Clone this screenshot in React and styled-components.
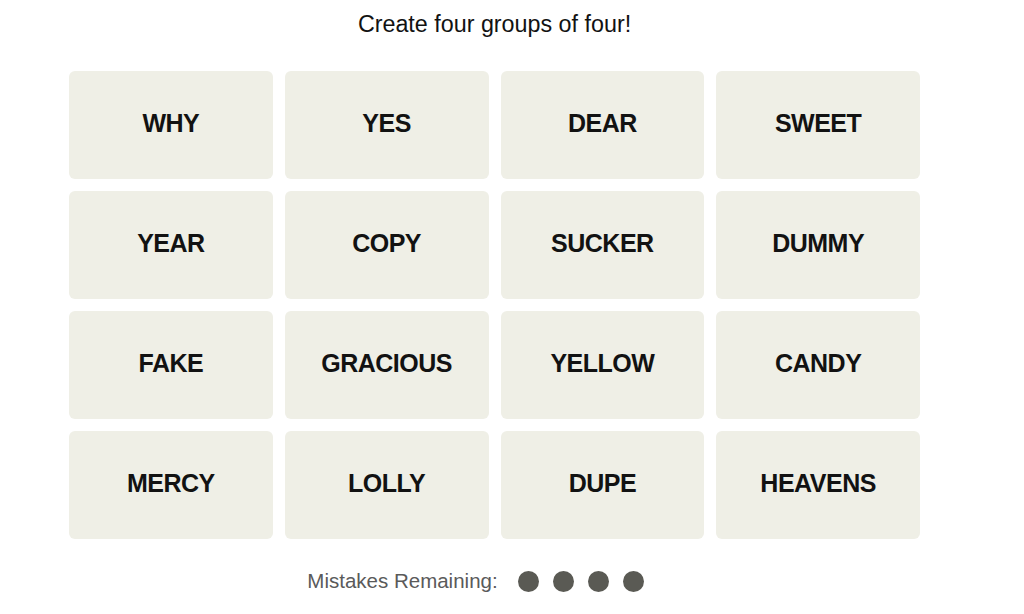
import React from "react";
import styled, { createGlobalStyle } from "styled-components";

const Global = createGlobalStyle`
  html, body { margin: 0; padding: 0; background: #ffffff; }
  body { font-family: "Liberation Sans", Arial, sans-serif; color: #121212; }
`;

const Page = styled.main`
  width: 851px;
  margin-left: 69px;
  padding-top: 9px;
  display: flex;
  flex-direction: column;
`;

const Title = styled.h1`
  margin: 0;
  height: 30px;
  line-height: 30px;
  font-size: 23.3px;
  font-weight: 400;
  text-align: center;
  color: #121212;
`;

const Grid = styled.section`
  margin-top: 32px;
  display: grid;
  grid-template-columns: repeat(4, 1fr);
  grid-auto-rows: 108px;
  gap: 12px;
`;

const Tile = styled.button`
  border: none;
  border-radius: 6px;
  background: #efefe6;
  font-family: "Liberation Sans", Arial, sans-serif;
  font-size: 25px;
  letter-spacing: -0.5px;
  font-weight: 700;
  color: #121212;
  text-transform: uppercase;
  display: flex;
  align-items: center;
  justify-content: center;
  padding: 0 0 4px 0;
  cursor: pointer;
`;

const Footer = styled.div`
  margin-top: 31px;
  height: 22px;
  display: flex;
  align-items: center;
  justify-content: center;
  padding-right: 38px;
  gap: 14px;
`;

const Label = styled.span`
  font-size: 20.5px;
  color: #5a5a5a;
  margin-right: 6px;
`;

const Dot = styled.span`
  width: 21px;
  height: 21px;
  border-radius: 50%;
  background: #5a5a54;
  flex: none;
`;

const words = [
  "WHY", "YES", "DEAR", "SWEET",
  "YEAR", "COPY", "SUCKER", "DUMMY",
  "FAKE", "GRACIOUS", "YELLOW", "CANDY",
  "MERCY", "LOLLY", "DUPE", "HEAVENS",
];

export default function App() {
  return (
    <>
      <Global />
      <Page>
        <Title>Create four groups of four!</Title>
        <Grid>
          {words.map((w) => (
            <Tile key={w}>{w}</Tile>
          ))}
        </Grid>
        <Footer>
          <Label>Mistakes Remaining:</Label>
          <Dot />
          <Dot />
          <Dot />
          <Dot />
        </Footer>
      </Page>
    </>
  );
}
